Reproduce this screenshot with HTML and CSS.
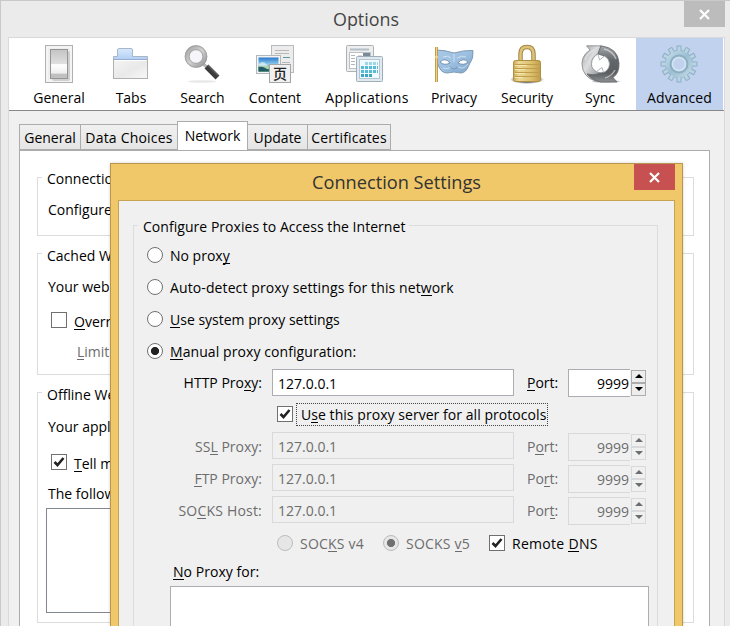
FILE: index.html
```html
<!DOCTYPE html>
<html lang="en">
<head>
<meta charset="utf-8">
<title>Options</title>
<link rel="stylesheet" href="styles.css">
</head>
<body>
<main class="window">
  <header class="titlebar">
    <h1>Options</h1>
    <button class="close" aria-label="Close"><svg width="11" height="9" viewBox="0 0 11 9"><path d="M1 0 L10 9 M10 0 L1 9" stroke="#fff" stroke-width="2.2"/></svg></button>
  </header>
  <section class="client">
    <nav class="toolbar">
      <div class="tool w72">
        <svg width="38" height="38" viewBox="0 0 38 38"><defs><linearGradient id="sw" x2="0" y2="1"><stop stop-color="#c4c4c4"/><stop offset=".5" stop-color="#e0e0e0"/><stop offset=".52" stop-color="#fff"/><stop offset=".82" stop-color="#eee"/><stop offset=".84" stop-color="#c0c0c0"/></linearGradient></defs><rect x="5.5" y=".5" width="27" height="37" fill="#eee" stroke="#b0b0b0"/><rect x="7" y="2" width="24" height="34" fill="none" stroke="#fafafa"/><rect x="12" y="6" width="18" height="30" rx="2" fill="#cfcfcf"/><rect x="10.5" y="4.500" width="17" height="29" fill="url(#sw)" stroke="#959595"/></svg>
        <span>General</span>
      </div>
      <div class="tool w72">
        <svg width="38" height="38" viewBox="0 0 38 38"><defs><linearGradient id="tb" x2="0" y2="1"><stop stop-color="#d8e9ff"/><stop offset="1" stop-color="#b0cdf3"/></linearGradient><linearGradient id="tf" x2="1" y2="1"><stop stop-color="#f4f4f4"/><stop offset=".55" stop-color="#e9e9e9"/><stop offset="1" stop-color="#f8f8f8"/></linearGradient></defs><path d="M1.500 15V11.500H5.500V5Q5.500 3.500 7 3.500H19Q20.500 3.500 20.500 5V11.500H35.500V15Z" fill="url(#tb)" stroke="#a9b6c8"/><rect x="1.500" y="14.500" width="34" height="19" fill="url(#tf)" stroke="#b0b0b0"/><path d="M2 14.500H35" stroke="#93add0"/><path d="M2.500 15.500H34.500" stroke="#fff"/></svg>
        <span>Tabs</span>
      </div>
      <div class="tool w71">
        <svg width="38" height="38" viewBox="0 0 38 38"><defs><linearGradient id="lr" x2="1" y2="1"><stop stop-color="#a5a5a5"/><stop offset=".5" stop-color="#d0d0d0"/><stop offset="1" stop-color="#9a9a9a"/></linearGradient></defs><ellipse cx="18" cy="36.500" rx="14" ry="1.300" fill="#e8e8e8"/><path d="M18 18L24 23" stroke="#b5b5b5" stroke-width="3"/><path d="M22.500 21.500L33.500 32.500" stroke="#3c3c3c" stroke-width="5.500"/><path d="M23.500 20L34 30.500" stroke="#777" stroke-width="1"/><circle cx="12" cy="11.500" r="9" fill="#f5f5fa" stroke="url(#lr)" stroke-width="4.500"/><circle cx="12" cy="11.500" r="10.800" fill="none" stroke="#999" stroke-width=".8"/><circle cx="12" cy="11.500" r="6.800" fill="none" stroke="#9a9a9a" stroke-width=".8"/></svg>
        <span>Search</span>
      </div>
      <div class="tool w74">
        <svg width="38" height="38" viewBox="0 0 38 38"><defs><linearGradient id="sky" x2="0" y2="1"><stop stop-color="#2b78cc"/><stop offset=".55" stop-color="#9bd6f0"/><stop offset=".6" stop-color="#529b5c"/><stop offset="1" stop-color="#2c7347"/></linearGradient></defs><rect x="15.500" y=".5" width="22" height="27" fill="#ececec" stroke="#b4bcc0"/><path d="M19 5.500H33M19 8.500H33M26 17.500H34" stroke="#b8b8b8"/><path d="M27 12.500H34" stroke="#5c999f"/><rect x=".5" y="10.500" width="24" height="18" fill="#f3f3f3" stroke="#b0b8bc"/><rect x="2.500" y="12.500" width="20" height="14" fill="url(#sky)"/><path d="M3 19Q7 15 10 19T17 22L12 24H3Z" fill="#fff" opacity=".55"/><path d="M2.500 22Q9 21 13 26.500H2.500Z" fill="#205e68"/><rect x="13.500" y="19.500" width="21" height="18" fill="#f0f0f0" stroke="#a5a5a5"/><text x="17" y="34" font-size="14" font-weight="500" font-family="'Noto Sans CJK SC', sans-serif" fill="#222">页</text></svg>
        <span>Content</span>
      </div>
      <div class="tool w107 apps">
        <svg width="38" height="38" viewBox="0 0 38 38"><rect x=".5" y=".5" width="27" height="26" rx="1" fill="#eee" stroke="#a8b2b8"/><rect x="3.500" y="7.500" width="21" height="16" fill="#fff" stroke="#b9c1c7"/><path d="M4 4.500H23" stroke="#b4bfc7" stroke-width="2"/><path d="M5 10.500H9M5 13.500H9M5 16.500H9M5 19.500H9M12 11H16" stroke="#b5b5b5"/><rect x="17" y="8" width="7" height="3" fill="#7b8a95"/><rect x="10.500" y="11.500" width="26" height="25" rx="1" fill="#dfe9ef" stroke="#9eafb9"/><rect x="13.500" y="14.500" width="20" height="19" fill="#f1faff" stroke="#b3c6d1"/><path d="M19 18.500H32" stroke="#9ed6e8" stroke-width="3" stroke-dasharray="3 1"/><path d="M15 22.500H32M15 26.500H32" stroke="#58bbd6" stroke-width="3" stroke-dasharray="3 1"/><path d="M15 30.500H27" stroke="#3aa6c4" stroke-width="3" stroke-dasharray="3 1"/></svg>
        <span>Applications</span>
      </div>
      <div class="tool w70">
        <svg width="42" height="38" viewBox="0 0 42 38"><defs><linearGradient id="mk" x2="1" y2="1"><stop stop-color="#a9c8e6"/><stop offset=".5" stop-color="#9dbfe0"/><stop offset="1" stop-color="#7ba3cb"/></linearGradient></defs><path d="M3 5Q12 5 21 8Q31 5 40 5.500Q41 13 36 20Q33 28 28 28Q24 27.500 21 27Q18 27.500 14 28Q8 28 5 20Q2 13 3 5Z" fill="url(#mk)" stroke="#7f9ab5"/><path d="M7 17Q12 12 17 18Q11 21 7 17ZM25 18Q30 12 35 17Q31 21 25 18Z" fill="#fff" stroke="#6485a6" stroke-width=".8"/><path d="M21 9V17M10 12Q15 10 18 13M24 13Q29 10 33 12M10 23Q16 25 18 21M24 21Q30 26 35 19" fill="none" stroke="#e0effa" opacity=".7"/><path d="M17 21Q18 24 21 24Q24 24 25 21" fill="none" stroke="#6f92b5" stroke-width=".8"/><path d="M3.500 2V37" stroke="#c09d50" stroke-width="3"/><path d="M3.500 2V37" stroke="#ecd38a"/><circle cx="3.500" cy="12" r="1.500" fill="#f0d58b"/></svg>
        <span>Privacy</span>
      </div>
      <div class="tool w75 lock">
        <svg width="38" height="38" viewBox="0 0 38 38"><defs><linearGradient id="gd" x2="1"><stop stop-color="#cba755"/><stop offset=".2" stop-color="#ecd996"/><stop offset=".65" stop-color="#dcc06e"/><stop offset="1" stop-color="#c19d48"/></linearGradient><radialGradient id="sh"><stop offset=".6" stop-color="#666"/><stop offset="1" stop-color="#666" stop-opacity="0"/></radialGradient></defs><ellipse cx="19" cy="34.500" rx="17" ry="4.500" fill="url(#sh)"/><path d="M12.500 17V9Q12.500 2 19 2T25.500 9V17" fill="none" stroke="#a58742" stroke-width="4.500"/><path d="M12.500 17V9Q12.500 2 19 2T25.500 9V17" fill="none" stroke="#ddc27b" stroke-width="2.500"/><rect x="5.500" y="15.500" width="27" height="21" rx="2" fill="url(#gd)" stroke="#b08f43"/><path d="M7 19.500H31M7 23.500H31M7 27.500H31M7 31.500H31" stroke="#bf9d4c"/><path d="M7 20.500H19M7 24.500H17M7 28.500H17M7 32.500H15" stroke="#f5e6ad"/></svg>
        <span>Security</span>
      </div>
      <div class="tool w72">
        <svg width="39" height="38" viewBox="0 0 39 38"><defs><linearGradient id="s1" x2="1" y2="1"><stop stop-color="#9a9da0"/><stop offset=".4" stop-color="#dcdee0"/><stop offset="1" stop-color="#797d81"/></linearGradient><linearGradient id="s2" x2="0" y2="1"><stop stop-color="#a6aaad"/><stop offset=".4" stop-color="#62676b"/><stop offset=".75" stop-color="#5a5e61"/><stop offset="1" stop-color="#8e9093"/></linearGradient></defs><ellipse cx="25" cy="36.500" rx="14" ry="1.500" fill="#c8c8c8"/><path d="M5.500 .8L20 .8L17 9Q10 12 10.500 20Q12 27 20 28L21 37Q6 36 2 25Q-2 12 9 5Z" fill="url(#s1)" stroke="#85888b" stroke-width=".8"/><path d="M20 .8Q37 3 38 18Q38.500 28 32 32.500L36 37H21Q12 36 6 29Q13 31 20 28Q28 27 28.500 19Q27 11 17 9Z" fill="url(#s2)" stroke="#63676a" stroke-width=".8"/><path d="M17 9L18.500 15L23.500 11Q28.500 14 28.500 19Q28 25 22.500 27.500L21 22.500L15.500 26.500Q10.500 24 10.500 19Q11 12 17 9Z" fill="#fff" stroke="#939698" stroke-width=".7"/><path d="M23 4Q32 6 35 14M4 15Q6 8 13 5M24 33Q31 31 34 25" fill="none" stroke="#eee" stroke-width="1.300" opacity=".6"/></svg>
        <span>Sync</span>
      </div>
      <div class="tool selected">
        <svg width="38" height="38" viewBox="-19 -19 38 38"><defs><linearGradient id="gr" x2="1" y2="1"><stop stop-color="#c5deeb"/><stop offset=".5" stop-color="#9dbfd2"/><stop offset="1" stop-color="#c3dae6"/></linearGradient></defs><g stroke="#8fb0c5" stroke-width="5"><path d="M0 -18.500V18.500M-18.500 0H18.500"/><path d="M0 -18.500V18.500M-18.500 0H18.500" transform="rotate(30)"/><path d="M0 -18.500V18.500M-18.500 0H18.500" transform="rotate(60)"/></g><circle r="14" fill="#8fb0c5"/><g stroke="#b9d4e2" stroke-width="3"><path d="M0 -17.500V17.500M-17.500 0H17.500"/><path d="M0 -17.500V17.500M-17.500 0H17.500" transform="rotate(30)"/><path d="M0 -17.500V17.500M-17.500 0H17.500" transform="rotate(60)"/></g><circle r="13.300" fill="url(#gr)"/><circle r="8.500" fill="none" stroke="#8cafc4" stroke-width="2"/><circle r="6.500" fill="#c1d2ee" stroke="#d5e5ef" stroke-width="1.500"/></svg>
        <span>Advanced</span>
      </div>
    </nav>

    <div class="tabs">
      <div class="tab t1">General</div>
      <div class="tab t2">Data Choices</div>
      <div class="tab active">Network</div>
      <div class="tab t4">Update</div>
      <div class="tab t5">Certificates</div>
    </div>

    <div class="panel">
      <fieldset class="group g1">
        <legend>Connection</legend>
        <p>Configure</p>
      </fieldset>
      <fieldset class="group g2">
        <legend>Cached Web</legend>
        <p>Your web</p>
        <div class="check-line"><i class="box"></i><span><u>O</u>verride</span></div>
        <p class="limit"><u>L</u>imit</p>
      </fieldset>
      <fieldset class="group g3">
        <legend>Offline Web</legend>
        <p>Your application</p>
        <div class="check-line"><i class="box"><svg width="14" height="14" viewBox="0 0 14 14"><path d="M2.500 7L5.500 10L11.500 3" fill="none" stroke="#222" stroke-width="2.600"/></svg></i><span><u>T</u>ell me</span></div>
        <p class="following">The following</p>
        <div class="sites"></div>
      </fieldset>
    </div>
  </section>
</main>

<section class="dialog">
  <header class="dialog-title">
    <h2>Connection Settings</h2>
    <button class="close red" aria-label="Close"><svg width="11" height="9" viewBox="0 0 11 9"><path d="M1 0 L10 9 M10 0 L1 9" stroke="#fff" stroke-width="2.2"/></svg></button>
  </header>
  <div class="dialog-body">
    <fieldset class="proxies">
      <legend>Configure Proxies to Access the Internet</legend>
      <div class="row"><i class="radio"></i><span class="text">No prox<u>y</u></span></div>
      <div class="row"><i class="radio"></i><span class="text l2">Auto-detect proxy settings for this net<u>w</u>ork</span></div>
      <div class="row"><i class="radio"></i><span class="text"><u>U</u>se system proxy settings</span></div>
      <div class="row"><i class="radio on"></i><span class="text l4"><u>M</u>anual proxy configuration:</span></div>
      <div class="row server">
        <label>HTTP Pro<u>x</u>y:</label><div class="field">127.0.0.1</div><label class="port"><u>P</u>ort:</label><div class="field num">9999</div><div class="spin"><b class="up"></b><b class="down"></b></div>
      </div>
      <div class="row share"><i class="box"><svg width="14" height="14" viewBox="0 0 14 14"><path d="M2.500 7L5.500 10L11.500 3" fill="none" stroke="#222" stroke-width="2.600"/></svg></i><span class="focus">U<u>s</u>e this proxy server for all protocols</span></div>
      <div class="row server off">
        <label>SS<u>L</u> Proxy:</label><div class="field">127.0.0.1</div><label class="port">P<u>o</u>rt:</label><div class="field num">9999</div><div class="spin"><b class="up"></b><b class="down"></b></div>
      </div>
      <div class="row server off">
        <label><u>F</u>TP Proxy:</label><div class="field">127.0.0.1</div><label class="port">Po<u>r</u>t:</label><div class="field num">9999</div><div class="spin"><b class="up"></b><b class="down"></b></div>
      </div>
      <div class="row server off">
        <label class="sh">SO<u>C</u>KS Host:</label><div class="field">127.0.0.1</div><label class="port">Por<u>t</u>:</label><div class="field num">9999</div><div class="spin"><b class="up"></b><b class="down"></b></div>
      </div>
      <div class="row socks">
        <i class="radio dim"></i><span class="text v4">SOC<u>K</u>S v4</span>
        <i class="radio dim on"></i><span class="text v5">SOCKS <u>v</u>5</span>
        <i class="box"><svg width="14" height="14" viewBox="0 0 14 14"><path d="M2.500 7L5.500 10L11.500 3" fill="none" stroke="#222" stroke-width="2.600"/></svg></i><span class="text dns">Remote <u>D</u>NS</span>
      </div>
      <div class="except"><u>N</u>o Proxy for:</div>
      <div class="hosts"></div>
    </fieldset>
  </div>
</section>
</body>
</html>
```
FILE: styles.css
```css
* { box-sizing: border-box; }
html, body { margin: 0; height: 626px; overflow: hidden; }
body { position: relative; font: 14px/20px "Open Sans", "Noto Sans", sans-serif; color: #000; background: #ebebeb; }
h1, h2, p { margin: 0; font-weight: 400; }
u { text-decoration: none; box-shadow: inset 0 -1px currentColor; display: inline-block; height: 18px; line-height: 20px; vertical-align: top; }
fieldset { margin: 0; padding: 0; border: 1px solid #dcdcdc; min-width: 0; }
legend { padding: 4px 4px 0 5px; margin-left: 4px; height: 22px; line-height: 18px; white-space: nowrap; }
svg { display: block; overflow: visible; }

.window { height: 626px; border: solid #c9c9c9; border-width: 1px 0 0 1px; padding-left: 7px; overflow: hidden; }
.titlebar { display: flex; height: 36px; padding-right: 5px; }
.titlebar h1 { flex: 1; padding-left: 40px; font-size: 17.9px; line-height: 36px; text-align: center; color: #444; }
.close { display: flex; align-items: center; justify-content: center; width: 41px; height: 26px; padding: 0; border: 0; background: #bcbcbc; }
.red { background: #c75050; }

.client { width: 717px; height: 589px; border: 1px solid #d9d9d9; border-bottom: 0; background: #f0f0f0; }
.toolbar { display: flex; height: 73px; padding-left: 14px; background: #fff; border-bottom: 1px solid #888; }
.tool { display: flex; flex-direction: column; align-items: center; padding-top: 7px; white-space: nowrap; }
.tool span { margin-top: 5px; }
.w70 { width: 70px; } .w71 { width: 71px; } .w72 { width: 72px; } .w74 { width: 74px; } .w75 { width: 75px; } .w107 { width: 107px; }
.apps { padding-left: 3px; letter-spacing: .3px; }
.apps svg { margin-left: -4px; }
.lock { padding-left: 1px; }
.selected { width: 87px; background: #c1d2ee; letter-spacing: .12px; }
.selected svg { margin-left: -1px; }

.tabs { display: flex; align-items: flex-end; height: 39px; padding-left: 10px; }
.tab { height: 26px; border: 1px solid #acacac; border-right-width: 0; background: linear-gradient(#f0f0f0, #e5e5e5); text-align: center; line-height: 25px; white-space: nowrap; }
.t1 { width: 61px; }
.t2 { width: 97px; letter-spacing: .2px; }
.t4 { width: 59px; border-left: 0; }
.t5 { width: 84px; border-right-width: 1px; letter-spacing: .2px; }
.active { width: 71px; height: 29px; border-right-width: 1px; border-bottom: 0; background: #fff; line-height: 27px; }
.panel { width: 691px; height: 476px; margin-left: 10px; padding: 15px 15px 0 17px; background: #fff; border: 1px solid #acacac; border-bottom: 0; }
.group { width: 657px; white-space: nowrap; }
.group p { padding-left: 10px; }
.g1 { height: 70px; }
.g1 p { margin-top: 12px; }
.g2 { height: 133px; margin-top: 6px; }
.g2 legend, .g3 legend { padding-top: 5px; line-height: 17px; }
.g2 p:first-of-type { margin-top: 13px; }
.g3 { height: 242px; margin-top: 6px; }
.g3 p:first-of-type { margin-top: 14px; }
.check-line { display: flex; align-items: flex-start; height: 20px; margin-top: 15px; padding-left: 13px; gap: 7px; }
.g3 .check-line { margin-top: 17px; }
.box { display: flex; flex: none; width: 16px; height: 16px; background: #fff; border: 1px solid #707070; }
.group .limit { margin-top: 10px; padding-left: 39px; color: #6d6d6d; }
.following { margin-top: 10px; }
.sites { width: 600px; height: 105px; margin: 4px 0 0 8px; border: 1px solid #828790; }

.dialog { position: absolute; left: 110px; top: 163px; width: 573px; height: 463px; padding: 0 7px; background: #f0c869; border: 1px solid #b8964e; border-bottom: 0; box-shadow: 0 0 3px rgba(0, 0, 0, .18); }
.dialog-title { display: flex; height: 36px; }
.dialog-title h2 { flex: 1; padding-left: 41px; font-size: 18.2px; line-height: 37px; text-align: center; color: #333; }
.dialog-body { height: 426px; padding: 13px 16px 0 14px; background: #f0f0f0; border: 1px solid #c6a253; border-bottom: 0; }
.proxies { height: 412px; border-bottom: 0; }
.proxies legend { margin-bottom: 3px; letter-spacing: .04px; }
.row { display: flex; align-items: center; height: 32px; padding-left: 13px; white-space: nowrap; }
.row .text { padding-top: 2px; }
.radio { flex: none; width: 16px; height: 16px; margin-right: 7px; border: 1px solid #707070; border-radius: 50%; background: #fff; }
.on { background: radial-gradient(circle, #222 0 3.7px, #fff 4.4px); }
.dim { border-color: #bcbcbc; background: #e6e6e6; }
.dim.on { background: radial-gradient(circle, #707070 0 3.7px, #e6e6e6 4.4px); }
.l2 { letter-spacing: .11px; }
.l4 { letter-spacing: .08px; }
.server { padding-left: 0; }
.server label { width: 128px; text-align: right; }
.server .sh { letter-spacing: .2px; }
.field { width: 242px; height: 27px; margin: 0 0 2px 10px; padding-left: 5px; border: 1px solid #abadb3; background: #fff; line-height: 27px; }
.off .field { margin-bottom: 3px; }
.server .port { width: 31px; margin-left: 13px; text-align: left; }
.server .num { width: 62px; height: 28px; margin-bottom: 1px; padding: 0 1px 0 0; border-right: 0; text-align: right; }
.spin { display: flex; flex-direction: column; width: 15px; margin: 0 0 1px 1px; }
.spin b { display: flex; align-items: center; justify-content: center; height: 13px; border: 1px solid #acacac; background: #ededed; }
.spin b::before { content: ""; border: solid transparent; border-width: 0 4px; }
.spin .up::before { border-bottom: 4px solid #000; }
.spin .down::before { border-top: 4px solid #000; }
.off { color: #6d6d6d; }
.off .field { background: #f0f0f0; border-color: #d9d9d9; }
.off .spin b { background: #f0f0f0; border-color: #d9d9d9; }
.off .up::before { border-bottom-color: #6d6d6d; }
.off .down::before { border-top-color: #6d6d6d; }
.share { padding-left: 143px; }
.share .box { margin-bottom: 2px; }
.focus { height: 23px; margin: 0 0 2px 3px; padding: 1px 1px 0 4px; border: 1px dotted #444; letter-spacing: .05px; }
.socks { padding-left: 143px; }
.v4, .v5 { width: 83px; color: #6d6d6d; letter-spacing: .22px; }
.dns { margin-left: 7px; letter-spacing: .3px; }
.except { padding: 3px 0 0 39px; height: 27px; letter-spacing: .05px; }
.hosts { width: 479px; height: 40px; margin-left: 36px; background: #fff; border: 1px solid #abadb3; border-bottom: 0; }
```
